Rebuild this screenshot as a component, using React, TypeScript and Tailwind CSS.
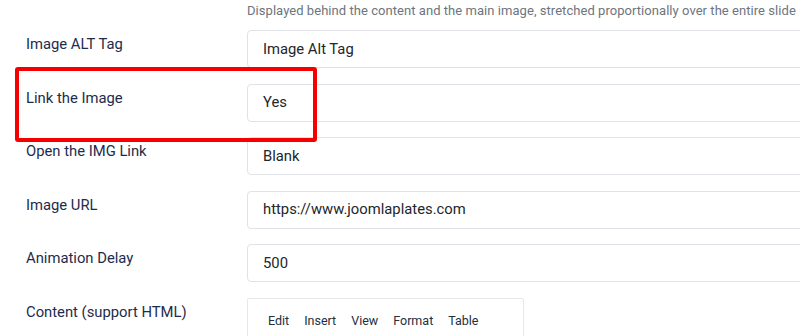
const rows = [
  { label: "Image ALT Tag", value: "Image Alt Tag" },
  { label: "Link the Image", value: "Yes" },
  { label: "Open the IMG Link", value: "Blank" },
  { label: "Image URL", value: "https://www.joomlaplates.com" },
  { label: "Animation Delay", value: "500" },
];

const App = () => {
  return (
    <main
      className="relative w-[800px] h-[336px] overflow-hidden bg-white"
      style={{ fontFamily: "Roboto, 'Noto Sans', sans-serif" }}
    >
      <div className="pl-[247px] pt-[1px] h-[30px] text-[13px] tracking-[0.05px] leading-[20px] text-[#6d757e] whitespace-nowrap">
        Displayed behind the content and the main image, stretched proportionally over the entire slide
      </div>
      <div className="flex flex-col">
        {rows.map((row, i) => (
          <div key={i} className="flex mb-[15.5px]">
            <label className="w-[247px] shrink-0 pl-[26px] pt-[3px] text-[14.8px] leading-[22px] text-[#1d2c4c]">
              {row.label}
            </label>
            <div className="flex-1 h-[38px] -mr-[10px] flex items-center pl-[15px] border border-[#dfe3e7] rounded-[4px] text-[14.8px] text-[#22262a]">
              {row.value}
            </div>
          </div>
        ))}
        <div className="flex">
          <label className="w-[247px] shrink-0 pl-[26px] pt-[3px] text-[14.8px] leading-[22px] text-[#1d2c4c]">
            Content (support HTML)
          </label>
          <div className="w-[277px] h-[60px] border border-[#e6e8ea] rounded-t-[2px] pt-[13px] pl-[20px] flex gap-[15px] text-[12.5px] text-[#222f3e]">
            <span>Edit</span>
            <span>Insert</span>
            <span>View</span>
            <span>Format</span>
            <span>Table</span>
          </div>
        </div>
      </div>
      {/* highlight */}
      <div className="absolute left-[15px] top-[67px] w-[302px] h-[75px] border-[4px] border-[#f40000] rounded-[3px]" />
    </main>
  );
};

export default App;
